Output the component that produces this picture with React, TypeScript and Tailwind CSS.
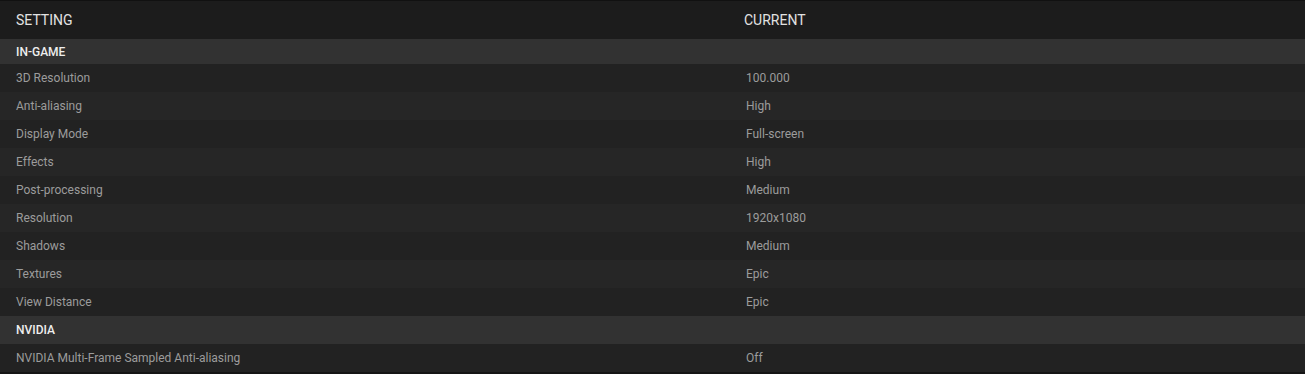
import React from "react";

const rows: { name: string; value: string }[] = [
  { name: "3D Resolution", value: "100.000" },
  { name: "Anti-aliasing", value: "High" },
  { name: "Display Mode", value: "Full-screen" },
  { name: "Effects", value: "High" },
  { name: "Post-processing", value: "Medium" },
  { name: "Resolution", value: "1920x1080" },
  { name: "Shadows", value: "Medium" },
  { name: "Textures", value: "Epic" },
  { name: "View Distance", value: "Epic" },
];

function Row({ name, value, odd }: { name: string; value: string; odd: boolean }) {
  return (
    <div className={`flex h-[28px] items-center text-[12px] text-[#9c9c9c] ${odd ? "bg-[#222222]" : "bg-[#262626]"}`}>
      <div className="w-[746px] pl-[16px]">{name}</div>
      <div>{value}</div>
    </div>
  );
}

function Section({ label, h }: { label: string; h: string }) {
  return (
    <div className={`flex ${h} items-center bg-[#323232] pl-[16px] text-[12px] font-medium text-[#eeeeee]`}>
      {label}
    </div>
  );
}

export default function App() {
  return (
    <div className="h-[374px] w-[1305px] overflow-hidden bg-[#151515] font-['Roboto',sans-serif]">
      <div className="h-[372px] border-t border-[#111111]">
        <div className="flex h-[38px] items-center bg-[#1c1c1c] text-[14px] text-[#e2e2e2]">
          <div className="w-[744px] pl-[16px]">SETTING</div>
          <div>CURRENT</div>
        </div>
        <Section label="IN-GAME" h="h-[25px]" />
        {rows.map((r, i) => (
          <Row key={r.name} name={r.name} value={r.value} odd={i % 2 === 0} />
        ))}
        <Section label="NVIDIA" h="h-[28px]" />
        <Row name="NVIDIA Multi-Frame Sampled Anti-aliasing" value="Off" odd={true} />
      </div>
    </div>
  );
}
